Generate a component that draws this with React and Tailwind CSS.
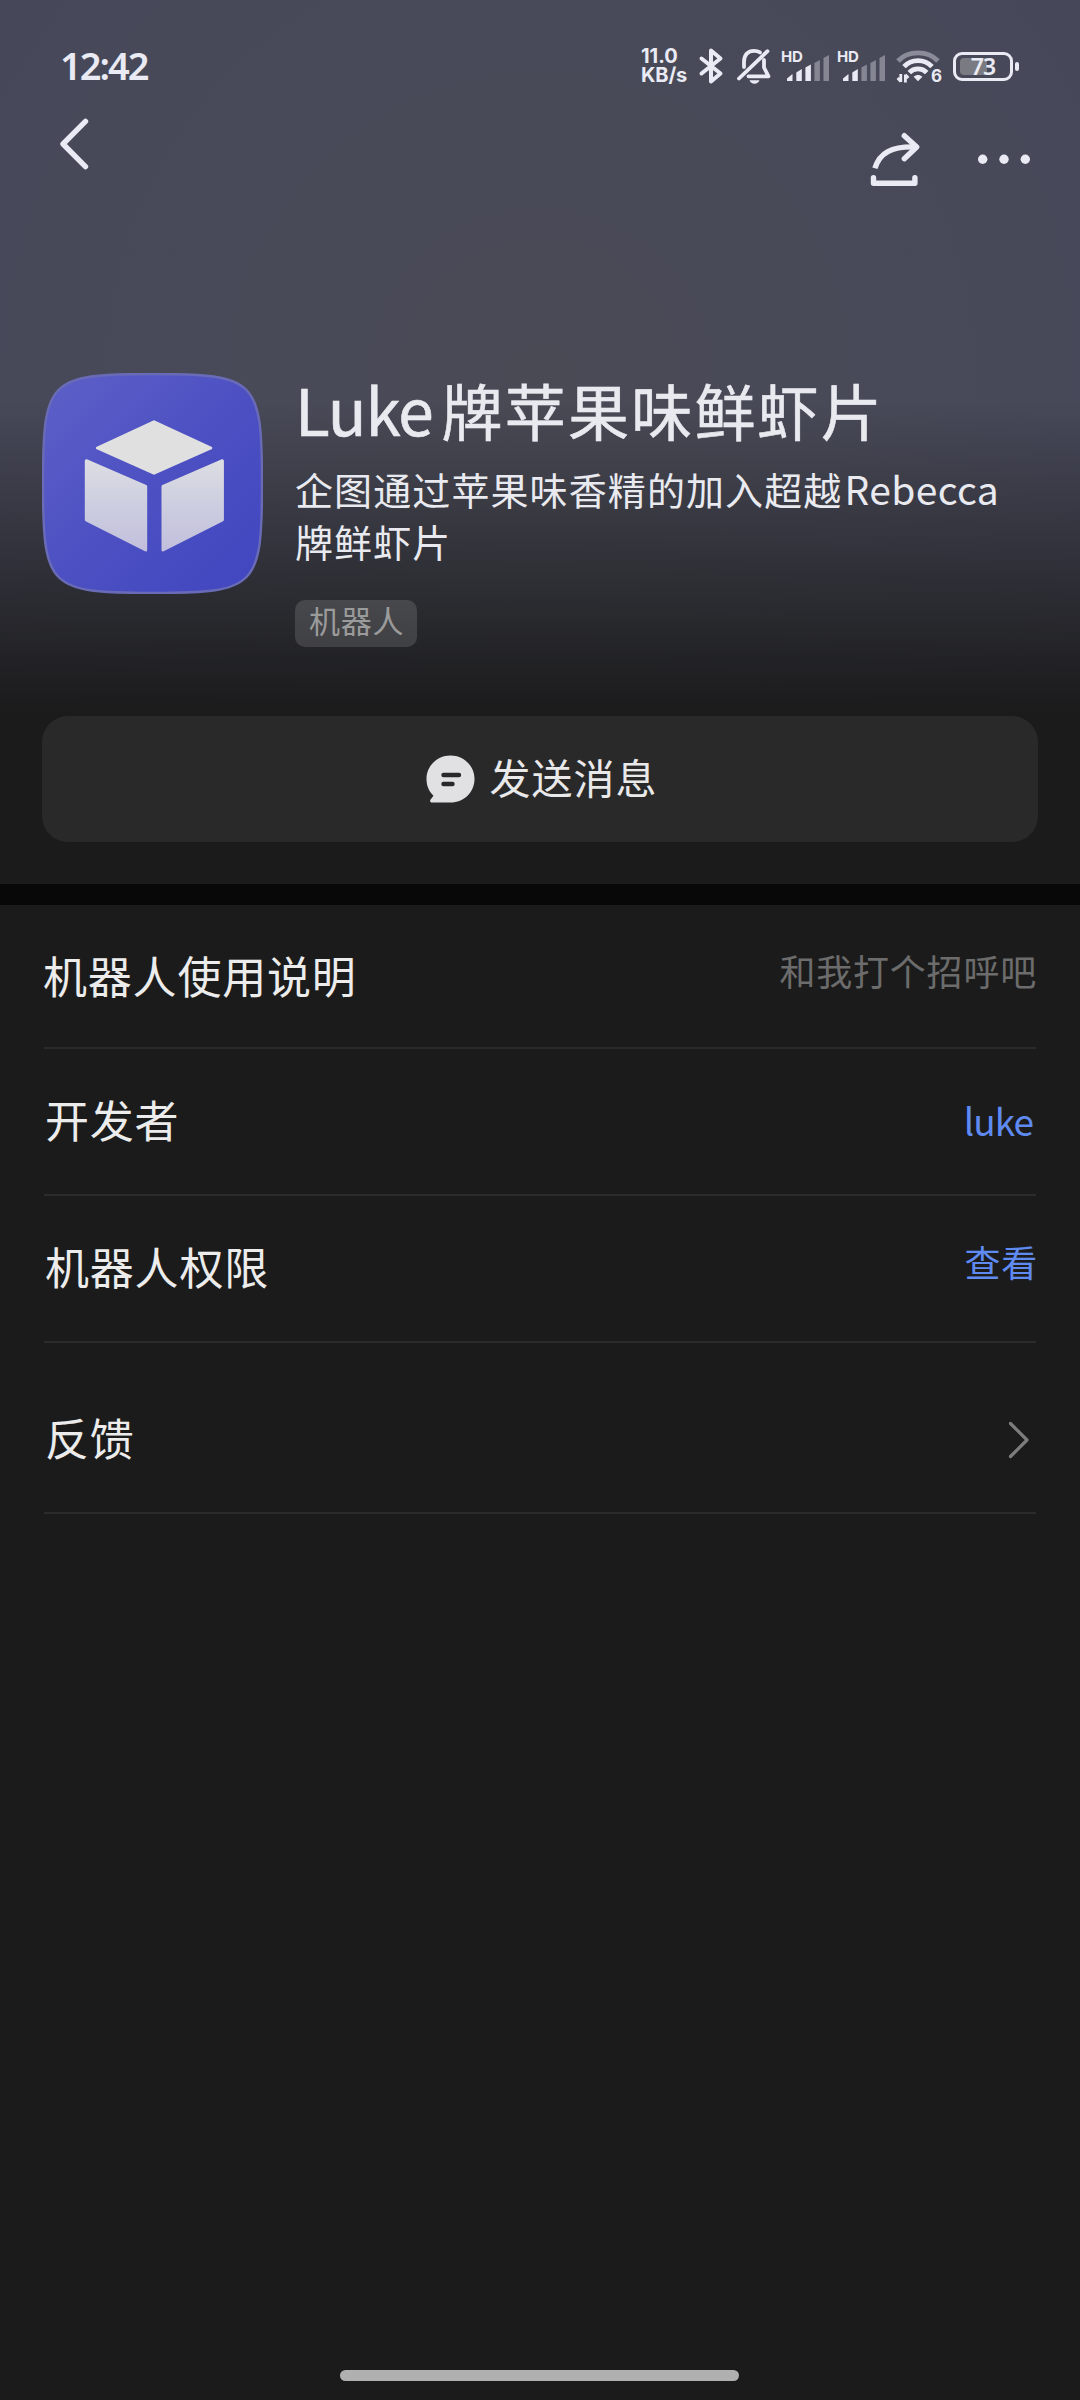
const INK = "#e9eaf3";

function Bluetooth() {
  return (
    <svg className="h-[38px] w-[26px]" viewBox="0 0 26 38" fill="none" stroke={INK} strokeWidth="4" strokeLinejoin="round" strokeLinecap="round">
      <path d="M3.5 11.5 L22.5 26.5 L13 34.5 V3.5 L22.5 11.5 L3.5 26.5" />
    </svg>
  );
}

function BellOff() {
  return (
    <svg className="h-[38px] w-[36px]" viewBox="0 0 36 38" fill="none" stroke={INK} strokeWidth="3.8" strokeLinejoin="round" strokeLinecap="round">
      <path d="M8 20 V15 C8 7.5 12 3.8 18 3.8 C20.5 3.8 22.3 4.3 24 5.4" />
      <path d="M28 13 V20.5 L32.5 29.3 H12.5" />
      <path d="M31.5 4.2 L3 31.5" />
      <path d="M13.5 33.2 H23.5 C22.8 35.4 20.8 36.8 18.5 36.8 C16.2 36.8 14.2 35.4 13.5 33.2 Z" fill={INK} stroke="none" />
    </svg>
  );
}

function Signal({ level }) {
  const bars = [
    "M0 26 V23.5 L5.5 19 V26 Z",
    "M9.3 26 V17.5 L14.8 14 V26 Z",
    "M18.4 26 V12.5 L23.9 9.4 V26 Z",
    "M27.4 26 V8 L32.9 4.9 V26 Z",
    "M36.5 26 V3 L42 0 V26 Z",
  ];
  return (
    <div className="relative h-[32px] w-[48px]">
      <span className="absolute left-0 top-[-2px] text-[15px] leading-[18px] font-bold tracking-[-0.2px] [font-family:Inter,sans-serif]">HD</span>
      <svg className="absolute bottom-0 right-0 h-[27px] w-[42px]" viewBox="0 0 42 27">
        {bars.map((d, i) => (
          <path key={d} d={d} fill={INK} opacity={i < level ? 1 : 0.38} />
        ))}
      </svg>
    </div>
  );
}

function Wifi() {
  return (
    <div className="relative h-[36px] w-[45px]">
      <svg className="h-[36px] w-[45px]" viewBox="0 0 45 36" fill="none" stroke={INK} strokeWidth="4.8">
        <path d="M2 13 C12 2.2 32 2.2 42 13" opacity="0.42" />
        <path d="M8 18.7 C15.5 10.6 28.5 10.6 36 18.7" />
        <path d="M13.3 24.6 C18 19.7 26 19.7 30.7 24.6" />
        <path d="M17.6 28.8 C20.5 26.4 23.5 26.4 26.4 28.8 L22 33.2 Z" fill={INK} stroke="none" />
        <path d="M4.8 26 V34 M1.6 30 L4.8 33.5 M9.4 34.5 V26.5 M9.4 26.8 L12.4 30" strokeWidth="2.8" />
      </svg>
      <span className="absolute right-[-1px] bottom-[-1px] text-[17px] leading-[18px] font-bold [font-family:Inter,sans-serif]">6</span>
    </div>
  );
}

function Battery() {
  return (
    <div className="flex items-center gap-[2px]">
      <div className="relative flex h-[29px] w-[60px] items-center justify-center rounded-[9px] border-[3px] border-[#e9eaf3]">
        <div className="absolute left-[4px] top-[3px] h-[17px] w-[27px] rounded-l-[4px] bg-[#797a82]" />
        <span className="relative text-[23px] leading-none font-semibold tracking-[-1px] [font-family:'Noto_Sans',sans-serif]">73</span>
      </div>
      <div className="h-[9px] w-[4px] rounded-full bg-[#e9eaf3]" />
    </div>
  );
}

function StatusBar() {
  return (
    <div className="flex h-[70px] items-end justify-between pr-[61px] pl-[60px] text-[#e9eaf3]">
      <div className="mb-[-16px] h-[36px] pt-px text-[38px] leading-[28px] font-semibold tracking-[-2px] whitespace-nowrap [font-family:'Noto_Sans',sans-serif]">12:42</div>
      <div className="mb-[-16px] flex h-[40px] items-center">
        <div className="mr-[8px] w-[49px] text-[20px] font-bold whitespace-nowrap [font-family:Inter,sans-serif]">
          <div className="h-[19px] leading-[19px]">11.0</div>
          <div className="h-[19px] leading-[19px] tracking-[-0.1px]">KB/s</div>
        </div>
        <div className="mr-[12px]"><Bluetooth /></div>
        <div className="mr-[9px]"><BellOff /></div>
        <div className="mr-[8px]"><Signal level={3} /></div>
        <div className="mr-[11px]"><Signal level={2} /></div>
        <div className="mr-[12px]"><Wifi /></div>
        <Battery />
      </div>
    </div>
  );
}

function NavBar() {
  return (
    <div className="mt-[46px] flex h-[74px] justify-between pl-[56px] pr-[48px]">
      <svg className="h-[56px] w-[36px]" viewBox="0 0 36 56" fill="none" stroke={INK} strokeWidth="5.4" strokeLinecap="round" strokeLinejoin="round">
        <path d="M29.5 5.3 L7 28 L29.5 50.7" />
      </svg>
      <div className="flex">
        <svg className="mt-[14px] mr-[54px] h-[58px] w-[54px]" viewBox="0 0 54 58" fill="none" stroke={INK} strokeWidth="5.4" strokeLinecap="round" strokeLinejoin="round">
          <path d="M4.9 38.3 C9.5 23 21 16 46.5 17" strokeLinecap="butt" />
          <path d="M34.3 5.7 L46.7 17 L34.3 28.7" />
          <path d="M3.5 47.8 V53.2 H44.9 V47.8" />
        </svg>
        <svg className="mt-[35px] h-[16px] w-[54px]" viewBox="0 0 54 16" fill={INK}>
          <circle cx="4.7" cy="8.3" r="4.7" />
          <circle cx="26" cy="8.3" r="4.7" />
          <circle cx="47.3" cy="8.3" r="4.7" />
        </svg>
      </div>
    </div>
  );
}

function Avatar() {
  const squircle = "M1 110.5 C1 6.5 6.5 1 110.5 1 S220 6.5 220 110.5 S214.5 220 110.5 220 S1 214.5 1 110.5 Z";
  return (
    <svg className="h-[221px] w-[221px] shrink-0" viewBox="0 0 221 221">
      <defs>
        <linearGradient id="tile" x1="0" y1="0" x2="1" y2="1">
          <stop offset="0" stopColor="#5e60c8" />
          <stop offset="0.5" stopColor="#4c50c2" />
          <stop offset="1" stopColor="#4146c0" />
        </linearGradient>
        <linearGradient id="face" x1="0" y1="0" x2="0" y2="1">
          <stop offset="0" stopColor="#dcdde2" />
          <stop offset="0.5" stopColor="#cccee0" />
          <stop offset="1" stopColor="#c2bfdc" />
        </linearGradient>
      </defs>
      <path d={squircle} fill="url(#tile)" stroke="#6a6bb6" strokeWidth="2.4" />
      <g strokeWidth="3" strokeLinejoin="round">
        <path d="M112 48.8 L168.8 75 L112 100.2 L55.4 75 Z" fill="#e0e0e0" stroke="#e0e0e0" />
        <path d="M44.3 87.7 L103.7 113.4 V177 L44.3 146.8 Z" fill="url(#face)" stroke="url(#face)" />
        <path d="M180.4 87.7 L121 113.4 V177 L180.4 146.8 Z" fill="url(#face)" stroke="url(#face)" />
      </g>
    </svg>
  );
}

function Profile() {
  return (
    <div className="mt-[183px] flex h-[343px] pl-[42px]">
      <Avatar />
      <div className="ml-[32px] flex flex-col items-start text-[#e9eaf0]">
        <h1 className="-mt-[3px] text-[61px] leading-[76px] font-normal tracking-[2.2px] whitespace-nowrap [-webkit-text-stroke:0.6px_#e9eaf0]">
          <span className="mr-[9px] text-[64px] tracking-[-1.2px]">Luke</span>牌苹果味鲜虾片
        </h1>
        <p className="mt-[15px] text-[38px] leading-[52px] tracking-[1.1px] whitespace-nowrap">
          企图通过苹果味香精的加入超越<span className="ml-[2px] text-[39px] leading-none tracking-[0.4px]">Rebecca</span>
          <br />
          牌鲜虾片
        </p>
        <div className="mt-[33px] h-[47px] w-[122px] rounded-[10px] bg-white/[0.13] pl-[14px] text-[31px] leading-[40px] tracking-[0.8px] whitespace-nowrap text-[#9b9b9b]">机器人</div>
      </div>
    </div>
  );
}

function MessageButton() {
  return (
    <button className="mx-[42px] flex h-[126px] items-center justify-center gap-[15px] rounded-[26px] bg-[#29292a] pl-[3px]">
      <svg className="h-[48px] w-[49px]" viewBox="0 0 49 48">
        <path d="M24.5 0.5 C38 0.5 48.5 11 48.5 24 C48.5 37 38 47.5 24.5 47.5 H6 C4.2 47.5 3.6 46 4.6 44.6 L7.5 40.8 C3 36.5 0.5 30.8 0.5 24 C0.5 11 11 0.5 24.5 0.5 Z" fill="#e1e1e3" />
        <path d="M17.5 20 H33 M17.5 29 H26.5" stroke="#29292a" strokeWidth="4.4" strokeLinecap="round" />
      </svg>
      <span className="pb-[6px] text-[41px] leading-[52px] tracking-[1px] text-[#e9e9ea]">发送消息</span>
    </button>
  );
}

function Row({ label, height, labelClass, children }) {
  return (
    <div className={`mx-[44px] flex justify-between border-b-[2px] border-[#2b2b2b] ${height}`}>
      <span className={`text-[44px] leading-[56px] tracking-[0.8px] text-[#ececec] ${labelClass}`}>{label}</span>
      {children}
    </div>
  );
}

export default function App() {
  return (
    <div className="flex h-[2400px] w-[1080px] flex-col overflow-hidden bg-[#1b1b1b] [font-family:'Noto_Sans_CJK_SC',sans-serif]">
      <div className="flex h-[884px] shrink-0 flex-col bg-[linear-gradient(180deg,transparent_0,transparent_400px,#1b1b1c_710px),radial-gradient(circle_at_540px_380px,#4a4a55_0,#484a58_300px,#46475a_750px)]">
        <StatusBar />
        <NavBar />
        <Profile />
        <MessageButton />
      </div>
      <div className="h-[21px] shrink-0 bg-[#080808]" />
      <Row label="机器人使用说明" height="h-[144px]" labelClass="mt-[42px] -ml-px">
        <span className="mt-[40px] -mr-px text-[36px] leading-[50px] tracking-[0.8px] text-[#6c6c6c]">和我打个招呼吧</span>
      </Row>
      <Row label="开发者" height="h-[147px]" labelClass="mt-[42px] ml-px">
        <span className="mt-[46px] mr-[3px] text-[37px] leading-[50px] tracking-[-1px] text-[#5f8af0]">luke</span>
      </Row>
      <Row label="机器人权限" height="h-[147px]" labelClass="mt-[42px] ml-px">
        <span className="mt-[40px] -mr-[2px] text-[36px] leading-[50px] tracking-[0.7px] text-[#5f8af0]">查看</span>
      </Row>
      <Row label="反馈" height="h-[171px]" labelClass="mt-[66px] ml-px">
        <svg className="mt-[77px] mr-[5px] h-[40px] w-[24px]" viewBox="0 0 24 40" fill="none" stroke="#7d7d7d" strokeWidth="3.2" strokeLinecap="round" strokeLinejoin="round">
          <path d="M3.5 3.5 L20 20 L3.5 36.5" />
        </svg>
      </Row>
      <div className="mt-auto mb-[19px] ml-[340px] h-[11px] w-[399px] rounded-full bg-[#b0b0b0]" />
    </div>
  );
}
